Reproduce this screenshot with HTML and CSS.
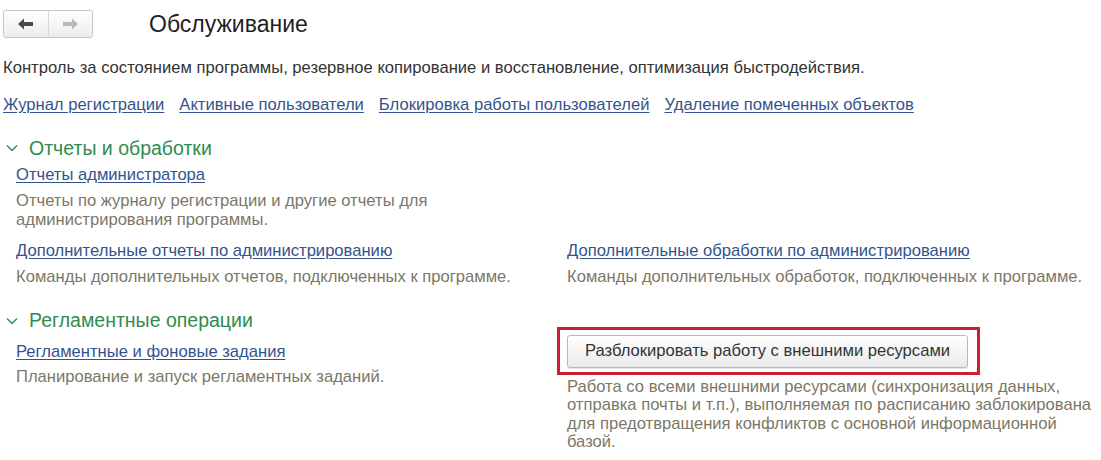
FILE: index.html
```html
<!DOCTYPE html>
<html>

<head>
  <meta charset="utf-8">
  <link rel="stylesheet" href="styles.css">
</head>

<body>
  <div class="page">
    <div class="topbar">
      <div class="nav-group">
        <button class="nav-btn">
          <svg class="nav-icon" viewBox="0 0 16 12">
            <path d="M0 6 L6 0.5 L6 4 L15 4 L15 8 L6 8 L6 11.5 Z" fill="#4a4a4a" />
          </svg>
        </button>
        <button class="nav-btn">
          <svg class="nav-icon" viewBox="0 0 16 12">
            <path d="M16 6 L10 0.5 L10 4 L1 4 L1 8 L10 8 L10 11.5 Z" fill="#b9b9b9" />
          </svg>
        </button>
      </div>
      <h1 class="title">Обслуживание</h1>
    </div>

    <p class="intro">Контроль за состоянием программы, резервное копирование и восстановление, оптимизация быстродействия.</p>

    <div class="quick-links">
      <a class="link" href="#">Журнал регистрации</a>
      <a class="link" href="#">Активные пользователи</a>
      <a class="link" href="#">Блокировка работы пользователей</a>
      <a class="link" href="#">Удаление помеченных объектов</a>
    </div>

    <div class="section">
      <div class="section-head">
        <svg class="chevron" viewBox="0 0 12 8">
          <path d="M1 1.5 L6 6.5 L11 1.5" fill="none" stroke="#2f8c4e" stroke-width="1.4" />
        </svg>
        <span class="section-title">Отчеты и обработки</span>
      </div>
      <div class="section-body">
        <div class="item narrow">
          <a class="link" href="#">Отчеты администратора</a>
          <div class="desc">Отчеты по журналу регистрации и другие отчеты для администрирования программы.</div>
        </div>
        <div class="row">
          <div class="item">
            <a class="link" href="#">Дополнительные отчеты по администрированию</a>
            <div class="desc">Команды дополнительных отчетов, подключенных к программе.</div>
          </div>
          <div class="item">
            <a class="link" href="#">Дополнительные обработки по администрированию</a>
            <div class="desc">Команды дополнительных обработок, подключенных к программе.</div>
          </div>
        </div>
      </div>
    </div>

    <div class="section">
      <div class="section-head">
        <svg class="chevron" viewBox="0 0 12 8">
          <path d="M1 1.5 L6 6.5 L11 1.5" fill="none" stroke="#2f8c4e" stroke-width="1.4" />
        </svg>
        <span class="section-title">Регламентные операции</span>
      </div>
      <div class="section-body">
        <div class="row with-button">
          <div class="item">
            <div class="link-line"><a class="link" href="#">Регламентные и фоновые задания</a></div>
            <div class="desc">Планирование и запуск регламентных заданий.</div>
          </div>
          <div class="item">
            <div class="button-wrap">
              <button class="button">Разблокировать работу с внешними ресурсами</button>
              <div class="highlight"></div>
            </div>
            <div class="desc">Работа со всеми внешними ресурсами (синхронизация данных, отправка почты и т.п.), выполняемая по расписанию заблокирована для предотвращения конфликтов с основной информационной базой.</div>
          </div>
        </div>
      </div>
    </div>
  </div>
</body>

</html>
```

FILE: styles.css
```css
* {
  box-sizing: border-box;
  margin: 0;
  padding: 0;
}

:root {
  --text: #333333;
  --link: #34538c;
  --muted: #7d7766;
  --green: #2f8c4e;
  --border: #c6c6c6;
}

body {
  width: 1101px;
  height: 460px;
  overflow: hidden;
  background: #ffffff;
  font-family: 'Liberation Sans', Arial, sans-serif;
  font-size: 16.6px;
  line-height: 19px;
  color: var(--text);
}

.page {
  padding: 10px 0 0 3px;
}

.topbar {
  display: flex;
  align-items: center;
  height: 28px;
}

.nav-group {
  display: flex;
  width: 90px;
  height: 28px;
  border: 1px solid var(--border);
  border-radius: 3px;
  overflow: hidden;
  background: linear-gradient(#ffffff, #ececec);
}

.nav-btn {
  flex: 1;
  display: flex;
  align-items: center;
  justify-content: center;
  border: none;
  background: transparent;
}

.nav-btn + .nav-btn {
  border-left: 1px solid #d8d8d8;
}

.nav-icon {
  width: 16px;
  height: 12px;
}

.title {
  margin-left: 56px;
  font-size: 23px;
  font-weight: 400;
  color: #1f1f1f;
}

.intro {
  margin-top: 20px;
}

.quick-links {
  display: flex;
  gap: 15px;
  margin-top: 18px;
}

.link {
  color: var(--link);
  text-decoration: underline;
  text-underline-offset: 2px;
}

.section {
  margin-top: 23px;
}

.section-head {
  display: flex;
  align-items: center;
  height: 22px;
  padding-left: 3px;
}

.chevron {
  width: 12px;
  height: 8px;
  margin-right: 11px;
}

.section-title {
  font-size: 19.5px;
  color: var(--green);
}

.section-body {
  padding: 6px 0 0 13px;
  display: flex;
  flex-direction: column;
  gap: 12px;
}

.row {
  display: grid;
  grid-template-columns: 551px 1fr;
}

.item {
  display: flex;
  flex-direction: column;
  gap: 8px;
  color: var(--muted);
}

.item.narrow {
  width: 531px;
}

.item .desc {
  line-height: 18.5px;
  max-width: 532px;
}

.with-button {
  margin-top: -3px;
}

.with-button .item {
  gap: 0;
}

.link-line {
  height: 33px;
  display: flex;
  align-items: center;
}

.button-wrap {
  position: relative;
  align-self: flex-start;
  margin-bottom: 10px;
}

.button {
  display: block;
  width: 401px;
  height: 33px;
  border: 1px solid #b8b8b8;
  border-radius: 3px;
  background: linear-gradient(#ffffff, #e9e9e9);
  font-family: inherit;
  font-size: 16.6px;
  color: #333333;
  box-shadow: 0 1px 1px rgba(0, 0, 0, 0.12);
}

.highlight {
  position: absolute;
  top: -8px;
  left: -10px;
  right: -12px;
  bottom: -7px;
  border: 3px solid #c91f30;
}
```
